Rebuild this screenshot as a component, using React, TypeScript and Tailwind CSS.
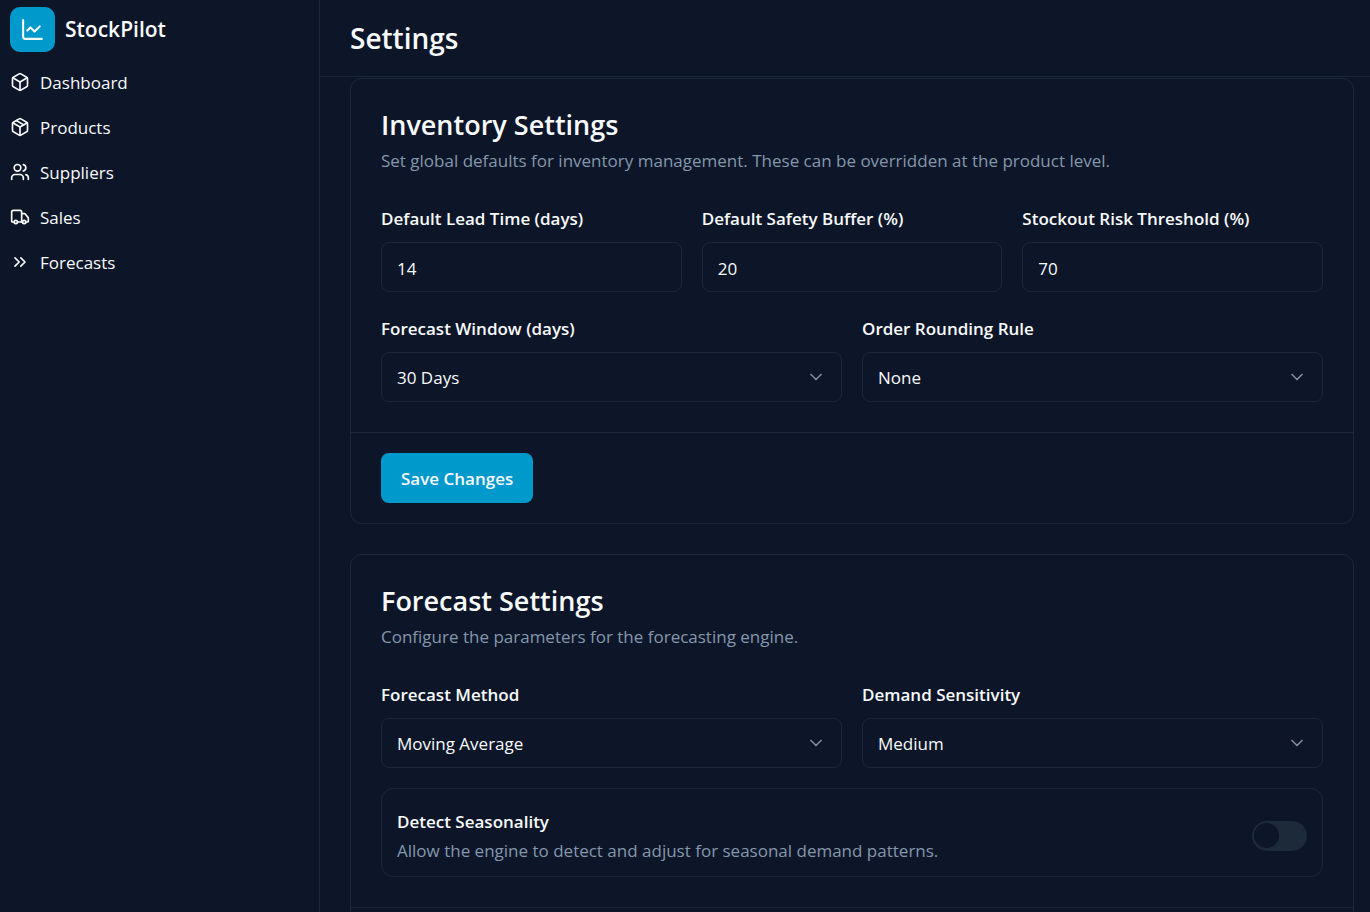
import type { ReactNode } from "react";
import {
  Box,
  ChartLine,
  ChevronDown,
  ChevronsRight,
  Package,
  Truck,
  Users,
} from "lucide-react";

const navItems = [
  { label: "Dashboard", href: "#dashboard", icon: Box },
  { label: "Products", href: "#products", icon: Package },
  { label: "Suppliers", href: "#suppliers", icon: Users },
  { label: "Sales", href: "#sales", icon: Truck },
  { label: "Forecasts", href: "#forecasts", icon: ChevronsRight },
];

type FieldProps = {
  id: string;
  label: string;
  children: ReactNode;
};

function Field({ id, label, children }: FieldProps) {
  return (
    <div className="flex min-w-0 flex-1 flex-col gap-1.5">
      <label htmlFor={id} className="text-[17px] leading-[34px] font-semibold">
        {label}
      </label>
      {children}
    </div>
  );
}

function NumberField({ id, label, value }: { id: string; label: string; value: string }) {
  return (
    <Field id={id} label={label}>
      <input
        id={id}
        type="text"
        inputMode="numeric"
        defaultValue={value}
        className="h-[50px] w-full rounded-lg border border-[#1b2838] bg-transparent px-[15px] pt-0.5 text-[17px] outline-none"
      />
    </Field>
  );
}

function SelectField({ id, label, options }: { id: string; label: string; options: string[] }) {
  return (
    <Field id={id} label={label}>
      <div className="relative">
        <select
          id={id}
          className="h-[50px] w-full appearance-none rounded-lg border border-[#1b2838] bg-[#0d1628] px-[15px] pt-0.5 text-[17px] outline-none"
        >
          {options.map((option) => (
            <option key={option}>{option}</option>
          ))}
        </select>
        <ChevronDown className="pointer-events-none absolute top-[15px] right-4 size-5 opacity-50" />
      </div>
    </Field>
  );
}

type CardProps = {
  title: string;
  description: string;
  children: ReactNode;
  footer?: ReactNode;
};

function Card({ title, description, children, footer }: CardProps) {
  return (
    <section className="shrink-0 rounded-xl border border-[#1b2838]">
      <div className="flex flex-col gap-[7px] px-[30px] pt-[30px] pb-[29px]">
        <h2 className="text-[27px] leading-8 font-semibold">{title}</h2>
        <p className="text-[17px] leading-[25px] text-[#8496ac]">{description}</p>
      </div>
      <div className="flex flex-col gap-5 px-[30px] pb-[30px]">{children}</div>
      <div className="border-t border-[#1b2838] px-[30px] py-5">{footer}</div>
    </section>
  );
}

export default function App() {
  return (
    <div className="flex h-screen overflow-hidden bg-[#0d1628] font-['Open_Sans','Noto_Sans',sans-serif] text-[#f8fafc]">
      {/* Sidebar */}
      <aside className="w-80 shrink-0 border-r border-[#1b2838]">
        <div className="flex items-center gap-2.5 px-2.5 py-[7px]">
          <div className="flex size-[45px] items-center justify-center rounded-[10px] bg-[#0099cc]">
            <ChartLine className="size-[25px]" />
          </div>
          <span className="text-[21px] font-semibold">StockPilot</span>
        </div>
        <nav>
          {navItems.map(({ label, href, icon: Icon }) => (
            <a key={label} href={href} className="flex h-[45px] items-center gap-2.5 px-2.5">
              <Icon className="size-5" />
              <span className="pt-[3px] text-[17px]">{label}</span>
            </a>
          ))}
        </nav>
      </aside>

      <div className="flex min-w-0 flex-1 flex-col">
        <header className="flex h-[77px] shrink-0 items-center border-b border-[#1b2838] px-[30px]">
          <h1 className="text-[28px] font-semibold">Settings</h1>
        </header>

        <main className="flex flex-1 flex-col gap-[30px] overflow-hidden pt-px pr-4 pl-[30px]">
          <Card
            title="Inventory Settings"
            description="Set global defaults for inventory management. These can be overridden at the product level."
            footer={
              <button
                type="button"
                className="h-[50px] rounded-lg bg-[#0099cc] px-5 pt-0.5 text-[17px] font-semibold"
              >
                Save Changes
              </button>
            }
          >
            <div className="flex gap-5">
              <NumberField id="lead-time" label="Default Lead Time (days)" value="14" />
              <NumberField id="safety-buffer" label="Default Safety Buffer (%)" value="20" />
              <NumberField id="risk-threshold" label="Stockout Risk Threshold (%)" value="70" />
            </div>
            <div className="flex gap-5">
              <SelectField id="forecast-window" label="Forecast Window (days)" options={["30 Days"]} />
              <SelectField id="rounding-rule" label="Order Rounding Rule" options={["None"]} />
            </div>
          </Card>

          <Card
            title="Forecast Settings"
            description="Configure the parameters for the forecasting engine."
          >
            <div className="flex gap-5">
              <SelectField id="forecast-method" label="Forecast Method" options={["Moving Average"]} />
              <SelectField id="demand-sensitivity" label="Demand Sensitivity" options={["Medium"]} />
            </div>
            <div className="flex items-center justify-between rounded-xl border border-[#1b2838] px-[15px] pt-[18px] pb-3">
              <div className="flex flex-col">
                <label htmlFor="seasonality" className="text-[17px] leading-[30px] font-semibold">
                  Detect Seasonality
                </label>
                <p className="text-[17px] leading-[27px] text-[#8496ac]">
                  Allow the engine to detect and adjust for seasonal demand patterns.
                </p>
              </div>
              <input
                id="seasonality"
                type="checkbox"
                role="switch"
                className="flex h-[30px] w-[55px] appearance-none items-center rounded-full bg-[#1d2a3a] px-0.5 before:size-[25px] before:rounded-full before:bg-[#0d1628] checked:justify-end checked:bg-[#0099cc]"
              />
            </div>
          </Card>
        </main>
      </div>
    </div>
  );
}
